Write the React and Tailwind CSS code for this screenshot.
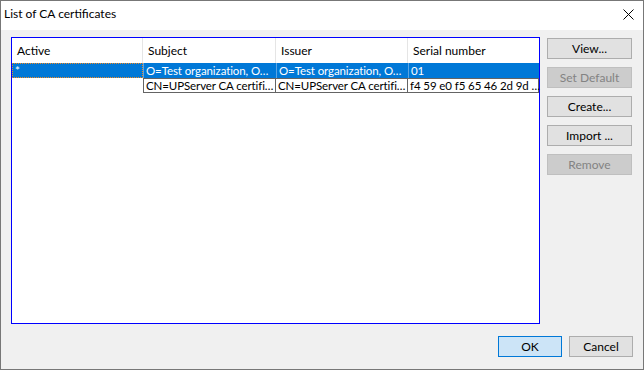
import React from 'react';

const cols = [
    { key: 'active', label: 'Active', w: 'w-[131px]' },
    { key: 'subject', label: 'Subject', w: 'w-[133px]' },
    { key: 'issuer', label: 'Issuer', w: 'w-[132px]' },
    { key: 'serial', label: 'Serial number', w: 'flex-1' },
];

const rows = [
    { active: '*', subject: 'O=Test organization, O…', issuer: 'O=Test organization, O…', serial: '01', selected: true },
    { active: '', subject: 'CN=UPServer CA certifi…', issuer: 'CN=UPServer CA certifi…', serial: 'f4 59 e0 f5 65 46 2d 9d …', selected: false },
];

const SideButton = ({ children, disabled }) => (
    <button
        className={
            'h-[21px] w-[85px] border text-[12px] leading-none ' +
            (disabled ? 'bg-[#cccccc] border-[#bfbfbf] text-[#838383]' : 'bg-[#e1e1e1] border-[#adadad] text-black')
        }
    >
        {children}
    </button>
);

const App = () => {
    return (
        <div className="w-[644px] h-[370px] border border-[#777777] bg-[#f0f0f0] flex flex-col font-['Lato',sans-serif] text-black select-none">
            {/* title bar */}
            <div className="h-[29px] bg-white flex items-center justify-between pl-[3px] pr-[9px] pb-[3px]">
                <span className="text-[12px]">List of CA certificates</span>
                <svg width="11" height="11" viewBox="0 0 11 11">
                    <path d="M0.5 0.5 L10.5 10.5 M10.5 0.5 L0.5 10.5" stroke="#000" strokeWidth="1" />
                </svg>
            </div>

            <div className="flex gap-[7px] pt-[7px] pl-[10px] pr-[11px]">
                {/* list */}
                <div className="w-[529px] h-[287px] border border-[#0000ff] bg-white flex flex-col">
                    <div className="flex h-[25px]">
                        {cols.map((c, i) => (
                            <div
                                key={c.key}
                                className={c.w + ' flex items-center pl-[5px] text-[12px] ' + (i < 3 ? 'border-r border-[#e5e5e5]' : '')}
                            >
                                {c.label}
                            </div>
                        ))}
                    </div>
                    {rows.map((r, ri) => (
                        <div key={ri} className={'flex h-[15px] ' + (r.selected ? 'bg-[#0078d7] text-white' : '')}>
                            {cols.map((c, i) => {
                                let cls = c.w + ' min-w-0 h-full flex items-center pl-[2px] text-[11.5px] tracking-[-0.1px] whitespace-nowrap ';
                                if (r.selected) {
                                    cls += i === 0 ? 'border border-dotted border-[#f08a24]' : 'border-l border-[#5ba4e3]';
                                } else if (i === 1) {
                                    cls += 'border border-[#646464]';
                                } else if (i > 1) {
                                    cls += 'border-y border-r border-[#646464]';
                                }
                                return (
                                    <div key={c.key} className={cls}>
                                        <span className="leading-[13px]">{r[c.key]}</span>
                                    </div>
                                );
                            })}
                        </div>
                    ))}
                </div>

                {/* side buttons */}
                <div className="flex flex-col gap-[8px] pt-[1px]">
                    <SideButton>View...</SideButton>
                    <SideButton disabled>Set Default</SideButton>
                    <SideButton>Create...</SideButton>
                    <SideButton>Import ...</SideButton>
                    <SideButton disabled>Remove</SideButton>
                </div>
            </div>

            <div className="flex justify-end gap-[7px] mt-[12px] pr-[10px]">
                <button className="h-[21px] w-[64px] border border-[#0078d7] bg-[#cce4f7] text-[12px] leading-none">OK</button>
                <button className="h-[21px] w-[64px] border border-[#adadad] bg-[#e1e1e1] text-[12px] leading-none">Cancel</button>
            </div>
        </div>
    );
};

export default App;
